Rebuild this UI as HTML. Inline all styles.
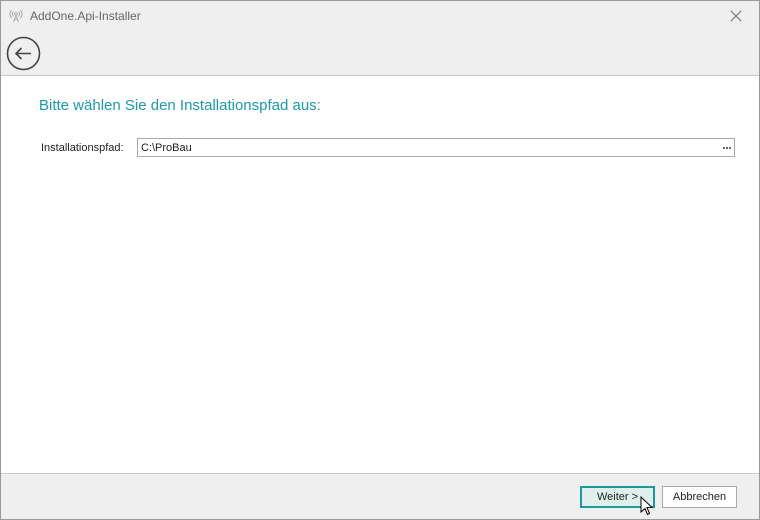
<!DOCTYPE html>
<html><head><meta charset="utf-8"><style>
*{margin:0;padding:0;box-sizing:border-box}
body{width:760px;height:520px;overflow:hidden;background:#efefef;font-family:"Liberation Sans",sans-serif;font-size:11px;color:#222;position:relative}
.win{position:absolute;left:0;top:0;width:760px;height:520px;border:1px solid #999}
.abs{position:absolute}
.d{position:absolute;top:147px;width:2px;height:2px;background:#666}
</style></head><body>
<div class="win"></div>
<svg class="abs" style="left:9px;top:9px" width="14" height="14" viewBox="0 0 14 14" fill="none" stroke="#aaa" stroke-width="1">
<circle cx="7" cy="5" r="1.3"/><path d="M7 6.5 L4.5 13 M7 6.5 L9.5 13 M5.5 10.5h3"/>
<path d="M4.5 2.5a3.5 3.5 0 0 0 0 5M9.5 2.5a3.5 3.5 0 0 1 0 5M2.5 1a6 6 0 0 0 0 8M11.5 1a6 6 0 0 1 0 8"/></svg>
<div class="abs" style="left:30px;top:9px;font-size:12px;color:#666">AddOne.Api-Installer</div>
<svg class="abs" style="left:730px;top:10px" width="12" height="12" viewBox="0 0 12 12" stroke="#777" stroke-width="1.2"><path d="M1 1L11 11M11 1L1 11"/></svg>
<svg class="abs" style="left:6px;top:36px" width="35" height="35" viewBox="0 0 35 35" fill="none" stroke="#444" stroke-width="1.6">
<circle cx="17.5" cy="17.5" r="16"/><path d="M10 17.5h15M15.5 12l-5.5 5.5 5.5 5.5"/></svg>
<div class="abs" style="left:1px;top:75px;width:758px;height:399px;background:#fff;border-top:1px solid #c8c8c8;border-bottom:1px solid #c8c8c8"></div>
<div class="abs" style="left:39px;top:97px;font-size:15px;color:#1a9aaa">Bitte wählen Sie den Installationspfad aus:</div>
<div class="abs" style="left:41px;top:142px;font-size:11px">Installationspfad:</div>
<div class="abs" style="left:137px;top:138px;width:598px;height:19px;border:1px solid #a8a8a8;background:#fff;padding:3px 0 0 3px">C:\ProBau</div>
<div class="d" style="left:723px"></div><div class="d" style="left:726px"></div><div class="d" style="left:729px"></div>
<div class="abs" style="left:580px;top:486px;width:75px;height:22px;border:2px solid #1a9a9a;background:#dff0ec;text-align:center;line-height:18px;font-size:11px">Weiter &gt;</div>
<div class="abs" style="left:662px;top:486px;width:75px;height:22px;border:1px solid #aaa;background:#fff;text-align:center;line-height:20px;font-size:11px">Abbrechen</div>
<svg class="abs" style="left:640px;top:496px" width="14" height="20" viewBox="0 0 14 20"><path d="M1 1v15l4-3.5 2.5 6 2-1-2.5-6h5z" fill="#fff" stroke="#000" stroke-width="1"/></svg>
</body></html>
